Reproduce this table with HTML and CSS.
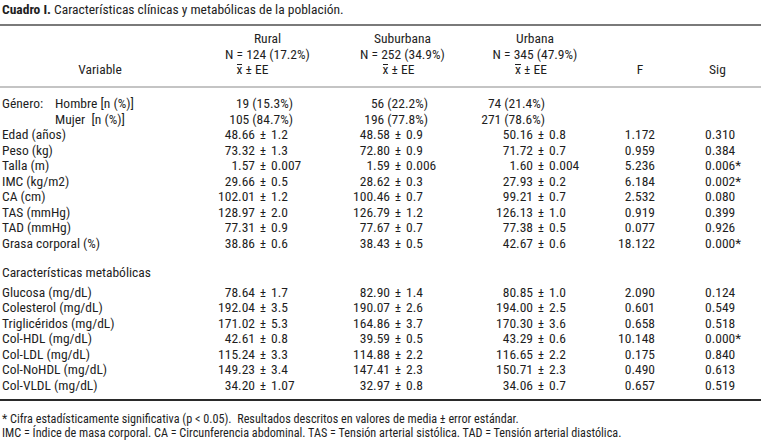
FILE: index.html
```html
<!DOCTYPE html>
<html lang="es">
<head>
<meta charset="utf-8">
<title>Cuadro I</title>
<link rel="stylesheet" href="styles.css">
</head>
<body>
<div class="page">
  <p class="title"><b>Cuadro I.</b> Características clínicas y metabólicas de la población.</p>
  <div class="table">
    <div class="row head">
      <div class="c var">Variable</div>
      <div class="c grp"><span>Rural</span><span>N = 124 (17.2%)</span><span class="xee r"><span class="xbar">x</span> ± EE</span></div>
      <div class="c grp"><span>Suburbana</span><span>N = 252 (34.9%)</span><span class="xee"><span class="xbar">x</span> ± EE</span></div>
      <div class="c grp"><span>Urbana</span><span>N = 345 (47.9%)</span><span class="xee"><span class="xbar">x</span> ± EE</span></div>
      <div class="c fh">F</div>
      <div class="c sh">Sig</div>
    </div>
    <div class="body">
      <div class="row"><div class="c lab"><span class="gen">Género:</span>Hombre [n (%)]</div><div class="c n1"><span class="cnt">19 (15.3%)</span></div><div class="c n2"><span class="cnt">56 (22.2%)</span></div><div class="c n3"><span class="cnt">74 (21.4%)</span></div><div class="c f"></div><div class="c s"></div></div>
      <div class="row"><div class="c lab"><span class="gen"></span>Mujer&nbsp; [n (%)]</div><div class="c n1"><span class="cnt">105 (84.7%)</span></div><div class="c n2"><span class="cnt">196 (77.8%)</span></div><div class="c n3"><span class="cnt">271 (78.6%)</span></div><div class="c f"></div><div class="c s"></div></div>
      <div class="row"><div class="c lab">Edad (años)</div><div class="c n1"><span class="m">48.66</span><span class="pm">±</span><span>1.2</span></div><div class="c n2"><span class="m">48.58</span><span class="pm">±</span><span>0.9</span></div><div class="c n3"><span class="m">50.16</span><span class="pm">±</span><span>0.8</span></div><div class="c f">1.172</div><div class="c s">0.310</div></div>
      <div class="row"><div class="c lab">Peso (kg)</div><div class="c n1"><span class="m">73.32</span><span class="pm">±</span><span>1.3</span></div><div class="c n2"><span class="m">72.80</span><span class="pm">±</span><span>0.9</span></div><div class="c n3"><span class="m">71.72</span><span class="pm">±</span><span>0.7</span></div><div class="c f">0.959</div><div class="c s">0.384</div></div>
      <div class="row"><div class="c lab">Talla (m)</div><div class="c n1"><span class="m">1.57</span><span class="pm">±</span><span>0.007</span></div><div class="c n2"><span class="m">1.59</span><span class="pm">±</span><span>0.006</span></div><div class="c n3"><span class="m">1.60</span><span class="pm">±</span><span>0.004</span></div><div class="c f">5.236</div><div class="c s">0.006*</div></div>
      <div class="row"><div class="c lab">IMC (kg/m2)</div><div class="c n1"><span class="m">29.66</span><span class="pm">±</span><span>0.5</span></div><div class="c n2"><span class="m">28.62</span><span class="pm">±</span><span>0.3</span></div><div class="c n3"><span class="m">27.93</span><span class="pm">±</span><span>0.2</span></div><div class="c f">6.184</div><div class="c s">0.002*</div></div>
      <div class="row"><div class="c lab">CA (cm)</div><div class="c n1"><span class="m">102.01</span><span class="pm">±</span><span>1.2</span></div><div class="c n2"><span class="m">100.46</span><span class="pm">±</span><span>0.7</span></div><div class="c n3"><span class="m">99.21</span><span class="pm">±</span><span>0.7</span></div><div class="c f">2.532</div><div class="c s">0.080</div></div>
      <div class="row"><div class="c lab">TAS (mmHg)</div><div class="c n1"><span class="m">128.97</span><span class="pm">±</span><span>2.0</span></div><div class="c n2"><span class="m">126.79</span><span class="pm">±</span><span>1.2</span></div><div class="c n3"><span class="m">126.13</span><span class="pm">±</span><span>1.0</span></div><div class="c f">0.919</div><div class="c s">0.399</div></div>
      <div class="row"><div class="c lab">TAD (mmHg)</div><div class="c n1"><span class="m">77.31</span><span class="pm">±</span><span>0.9</span></div><div class="c n2"><span class="m">77.67</span><span class="pm">±</span><span>0.7</span></div><div class="c n3"><span class="m">77.38</span><span class="pm">±</span><span>0.5</span></div><div class="c f">0.077</div><div class="c s">0.926</div></div>
      <div class="row"><div class="c lab">Grasa corporal (%)</div><div class="c n1"><span class="m">38.86</span><span class="pm">±</span><span>0.6</span></div><div class="c n2"><span class="m">38.43</span><span class="pm">±</span><span>0.5</span></div><div class="c n3"><span class="m">42.67</span><span class="pm">±</span><span>0.6</span></div><div class="c f">18.122</div><div class="c s">0.000*</div></div>
      <div class="section">Características metabólicas</div>
      <div class="row"><div class="c lab">Glucosa (mg/dL)</div><div class="c n1"><span class="m">78.64</span><span class="pm">±</span><span>1.7</span></div><div class="c n2"><span class="m">82.90</span><span class="pm">±</span><span>1.4</span></div><div class="c n3"><span class="m">80.85</span><span class="pm">±</span><span>1.0</span></div><div class="c f">2.090</div><div class="c s">0.124</div></div>
      <div class="row"><div class="c lab">Colesterol (mg/dL)</div><div class="c n1"><span class="m">192.04</span><span class="pm">±</span><span>3.5</span></div><div class="c n2"><span class="m">190.07</span><span class="pm">±</span><span>2.6</span></div><div class="c n3"><span class="m">194.00</span><span class="pm">±</span><span>2.5</span></div><div class="c f">0.601</div><div class="c s">0.549</div></div>
      <div class="row"><div class="c lab">Triglicéridos (mg/dL)</div><div class="c n1"><span class="m">171.02</span><span class="pm">±</span><span>5.3</span></div><div class="c n2"><span class="m">164.86</span><span class="pm">±</span><span>3.7</span></div><div class="c n3"><span class="m">170.30</span><span class="pm">±</span><span>3.6</span></div><div class="c f">0.658</div><div class="c s">0.518</div></div>
      <div class="row"><div class="c lab">Col-HDL (mg/dL)</div><div class="c n1"><span class="m">42.61</span><span class="pm">±</span><span>0.8</span></div><div class="c n2"><span class="m">39.59</span><span class="pm">±</span><span>0.5</span></div><div class="c n3"><span class="m">43.29</span><span class="pm">±</span><span>0.6</span></div><div class="c f">10.148</div><div class="c s">0.000*</div></div>
      <div class="row"><div class="c lab">Col-LDL (mg/dL)</div><div class="c n1"><span class="m">115.24</span><span class="pm">±</span><span>3.3</span></div><div class="c n2"><span class="m">114.88</span><span class="pm">±</span><span>2.2</span></div><div class="c n3"><span class="m">116.65</span><span class="pm">±</span><span>2.2</span></div><div class="c f">0.175</div><div class="c s">0.840</div></div>
      <div class="row"><div class="c lab">Col-NoHDL (mg/dL)</div><div class="c n1"><span class="m">149.23</span><span class="pm">±</span><span>3.4</span></div><div class="c n2"><span class="m">147.41</span><span class="pm">±</span><span>2.3</span></div><div class="c n3"><span class="m">150.71</span><span class="pm">±</span><span>2.3</span></div><div class="c f">0.490</div><div class="c s">0.613</div></div>
      <div class="row"><div class="c lab">Col-VLDL (mg/dL)</div><div class="c n1"><span class="m">34.20</span><span class="pm">±</span><span>1.07</span></div><div class="c n2"><span class="m">32.97</span><span class="pm">±</span><span>0.8</span></div><div class="c n3"><span class="m">34.06</span><span class="pm">±</span><span>0.7</span></div><div class="c f">0.657</div><div class="c s">0.519</div></div>
    </div>
  </div>
  <div class="notes">
    <p>* Cifra estadísticamente significativa (p &lt; 0.05).&nbsp; Resultados descritos en valores de media ± error estándar.</p>
    <p>IMC = Índice de masa corporal. CA = Circunferencia abdominal. TAS = Tensión arterial sistólica. TAD = Tensión arterial diastólica.</p>
  </div>
</div>
</body>
</html>
```

FILE: styles.css
```css
html, body {
  margin: 0;
  padding: 0;
  background: #ffffff;
}
body {
  font-family: "Roboto Condensed", "Liberation Sans", sans-serif;
  font-size: 13.5px;
  color: #1e1e1e;
  width: 761px;
  height: 445px;
  overflow: hidden;
}
.page {
  display: flex;
  flex-direction: column;
}
.title {
  margin: 0;
  padding: 2px 0 0 2px;
  height: 22px;
  line-height: 15px;
}
.title b {
  font-weight: bold;
}
.table {
  border-top: 2px solid #7a7a7a;
  border-bottom: 2px solid #2a2a2a;
}
.row {
  display: grid;
  grid-template-columns: 200px 135px 135px 130px 80px 1fr;
  line-height: 15.5px;
  white-space: nowrap;
}
.head {
  padding-top: 5px;
  padding-bottom: 8.5px;
  border-bottom: 2px solid #c4c4c4;
  line-height: 15.5px;
  align-items: end;
}
.grp {
  display: flex;
  flex-direction: column;
  align-items: center;
}
.xee.r {
  padding-right: 30px;
}
.xee {
  padding-right: 8px;
}
.xbar {
  display: inline-block;
  line-height: 9px;
  border-top: 1px solid #1e1e1e;
}
.var {
  text-align: center;
}
.fh, .sh {
  text-align: center;
}
.sh {
  padding-right: 6px;
}
.body {
  padding-top: 8px;
  padding-bottom: 6px;
}
.lab {
  padding-left: 2px;
}
.gen {
  display: inline-block;
  width: 53px;
}
.n1, .n2, .n3 {
  display: flex;
}
.m {
  display: inline-block;
  text-align: right;
}
.n1 .m, .n2 .m {
  width: 55px;
}
.n3 .m {
  width: 63px;
}
.pm {
  display: inline-block;
  width: 16px;
  text-align: center;
}
.cnt {
  display: inline-block;
  text-align: right;
}
.n1 .cnt, .n2 .cnt {
  width: 93px;
}
.n3 .cnt {
  width: 75px;
}
.f {
  text-align: right;
  padding-right: 25px;
}
.s {
  padding-left: 25px;
}
.section {
  padding: 14px 0 4px 2px;
  line-height: 15.5px;
}
.notes {
  padding: 11px 0 0 2px;
  font-size: 12.2px;
  line-height: 14px;
}
.notes p {
  margin: 0;
}
```
